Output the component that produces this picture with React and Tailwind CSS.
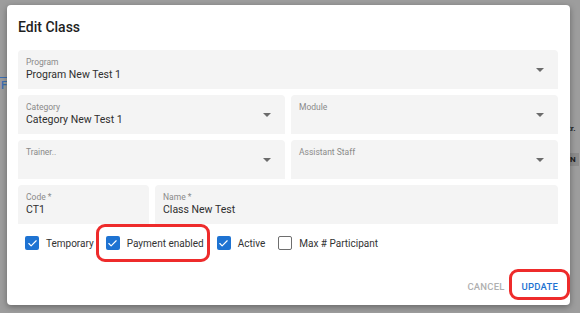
import { Check } from 'lucide-react';

const font = { fontFamily: 'Roboto, "Liberation Sans", sans-serif' };

const Arrow = () => (
  <svg width="8" height="4" viewBox="0 0 8 4" className="shrink-0">
    <path d="M0 0 L8 0 L4 4 Z" fill="#6b6b6b" />
  </svg>
);

const Field = ({ label, value, select, className = '' }) => (
  <div className={`h-[39px] bg-[#f4f4f4] rounded-t-[4px] flex items-start pl-[8px] pr-[14px] ${className}`}>
    <div className="flex-1 min-w-0 pt-[7px]">
      <div className="text-[8.5px] leading-[11px] text-[#8a8a8a]">{label}</div>
      {value && <div className="text-[10.5px] leading-[14px] text-[#2f2f2f]">{value}</div>}
    </div>
    {select && (
      <div className="h-full flex items-center">
        <Arrow />
      </div>
    )}
  </div>
);

const Box = ({ checked, label }) => (
  <label className="flex items-center gap-[7px]">
    {checked ? (
      <span className="w-[14px] h-[14px] rounded-[2px] bg-[#1e73d2] flex items-center justify-center">
        <Check size={11} color="#fff" strokeWidth={2.5} />
      </span>
    ) : (
      <span className="w-[14px] h-[14px] rounded-[2px] border-[1.5px] border-[#6e6e6e] bg-white" />
    )}
    <span className="text-[10px] text-[#333]">{label}</span>
  </label>
);

export default function App() {
  return (
    <div className="w-[580px] h-[313px] bg-[#9d9d9d] relative overflow-hidden" style={font}>
      {/* background page remnants */}
      <div className="absolute left-0 top-[77px] w-[10px] h-[1px] bg-[#3b6fb5]" />
      <div className="absolute left-[1px] top-[80px] text-[11px] leading-[12px] font-medium text-[#3b6fb5]">F</div>
      <div className="absolute left-[564px] top-[123px] text-[8px] font-bold text-[#222]">str.</div>
      <div className="absolute left-[568px] top-[153px] w-[11px] h-[13px] bg-[#8c8c8c] text-[8px] leading-[13px] font-bold text-[#222] pl-[2px]">N</div>

      <div className="absolute left-[7px] top-[5px] w-[563px] h-[300px] bg-white rounded-[4px] shadow-[0_2px_6px_rgba(0,0,0,0.35)] pl-[11px] pr-[12px]">
        <div className="pt-[10px] h-[34px] text-[14px] leading-[24px] font-medium text-[#1f1f1f]">Edit Class</div>

        <div className="mt-[11px] flex flex-col gap-[6px]">
          <Field label="Program" value="Program New Test 1" select />
          <div className="flex gap-[6px]">
            <Field className="w-[267px]" label="Category" value="Category New Test 1" select />
            <Field className="flex-1" label="Module" select />
          </div>
          <div className="flex gap-[6px]">
            <Field className="w-[267px]" label="Trainer.." select />
            <Field className="flex-1" label="Assistant Staff" select />
          </div>
          <div className="flex gap-[6px]">
            <Field className="w-[131px]" label="Code *" value="CT1" />
            <Field className="flex-1" label="Name *" value="Class New Test" />
          </div>
        </div>

        <div className="mt-[12px] pl-[7px] flex items-center h-[14px]">
          <Box checked label="Temporary" />
          <div className="ml-[12px]"><Box checked label="Payment enabled" /></div>
          <div className="ml-[13px]"><Box checked label="Active" /></div>
          <div className="ml-[13px]"><Box label="Max # Participant" /></div>
        </div>

        <div className="mt-[30px] flex justify-end items-center gap-[17px] text-[9.5px] font-medium tracking-[0.2px]">
          <span className="text-[#b0b0b0]">CANCEL</span>
          <span className="text-[#1e73d2]">UPDATE</span>
        </div>
      </div>

      {/* annotation highlights */}
      <div className="absolute left-[96px] top-[224px] w-[114px] h-[38px] border-[3px] border-[#ee2b2b] rounded-[9px]" />
      <div className="absolute left-[509px] top-[269px] w-[61px] h-[31px] border-[3px] border-[#ee2b2b] rounded-[9px]" />
    </div>
  );
}
